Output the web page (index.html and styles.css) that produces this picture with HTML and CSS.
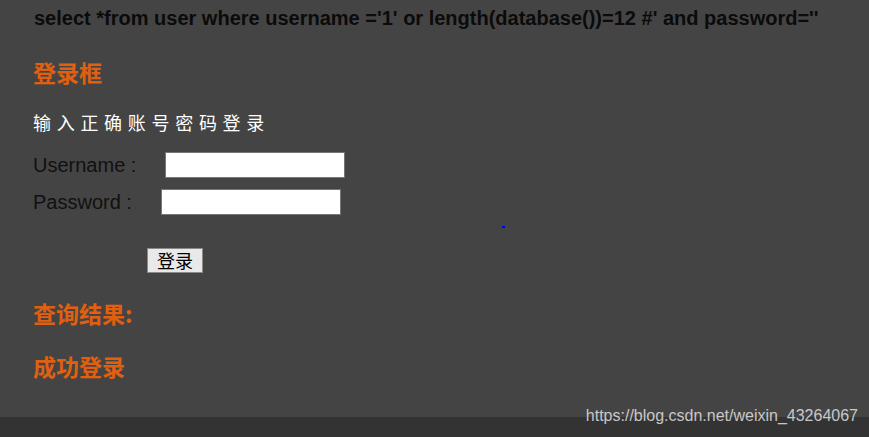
FILE: index.html
```html
<!DOCTYPE html>
<html lang="zh-CN">
<head>
  <meta charset="UTF-8">
  <title>登录框</title>
  <link rel="stylesheet" href="styles.css">
</head>
<body>
  <div class="page">
    <div class="main">
      <p class="sql">select *from user where username ='1' or length(database())=12 #' and password=''</p>
      <h3 class="title">登录框</h3>
      <p class="tip">输入正确账号密码登录</p>
      <form class="login" onsubmit="return false">
        <div class="row">
          <span class="label">Username :</span>
          <input type="text" name="username">
        </div>
        <div class="row">
          <span class="label">Password :</span>
          <input type="password" name="password">
        </div>
        <div class="dot-row"><a class="dot" href="#"></a></div>
        <div class="submit-row">
          <button type="submit">登录</button>
        </div>
      </form>
      <h3 class="title result">查询结果:</h3>
      <h3 class="title success">成功登录</h3>
    </div>
    <div class="strip"></div>
    <span class="watermark">https://blog.csdn.net/weixin_43264067</span>
  </div>
</body>
</html>
```

FILE: styles.css
```css
html, body {
  margin: 0;
  padding: 0;
  height: 100%;
}
body {
  background: #444444;
  font-family: 'Liberation Sans', Arial, 'Noto Sans CJK SC', sans-serif;
  color: #111;
}
.page {
  position: relative;
  display: flex;
  flex-direction: column;
  height: 100vh;
  overflow: hidden;
}
.main {
  height: 417px;
  padding: 0 33px;
  flex: none;
}
.strip {
  flex: 1;
  background: #333333;
}
.sql {
  margin: 5px 0 0 1px;
  font-size: 20px;
  line-height: 26px;
  font-weight: bold;
  color: #0b0b0b;
  white-space: nowrap;
}
.title {
  margin: 26px 0 0;
  font-family: 'Noto Sans CJK SC', sans-serif;
  font-size: 23px;
  line-height: 30px;
  font-weight: bold;
  color: #e0600f;
}
.tip {
  margin: 23px 0 0;
  font-family: 'Noto Sans CJK SC', sans-serif;
  font-size: 18px;
  line-height: 24px;
  letter-spacing: 5.7px;
  color: #fff;
}
.login {
  margin: 18px 0 0;
}
.row {
  display: flex;
  align-items: center;
  gap: 29px;
  height: 26px;
  font-size: 20px;
  margin-bottom: 11px;
}
.row input {
  box-sizing: border-box;
  width: 180px;
  height: 26px;
  margin: 0;
  border: 1px solid #767676;
  background: #fff;
}
.dot-row {
  height: 2px;
  margin-top: 6px;
  padding-left: 469px;
}
.dot {
  display: block;
  width: 3px;
  height: 2px;
  background: #0000ee;
}
.submit-row {
  margin-top: 20px;
  padding-left: 114px;
}
.submit-row button {
  box-sizing: border-box;
  width: 56px;
  height: 25px;
  padding: 0;
  border: 1px solid #8a8a8a;
  background: #e9e9e9;
  font-family: 'Noto Sans CJK SC', sans-serif;
  font-size: 18px;
  line-height: 23px;
  color: #000;
}
.result {
  margin-top: 25px;
}
.success {
  margin-top: 23px;
}
.watermark {
  position: absolute;
  right: 11px;
  top: 407px;
  font-size: 16px;
  line-height: 18px;
  color: rgba(255, 255, 255, 0.72);
}
```
